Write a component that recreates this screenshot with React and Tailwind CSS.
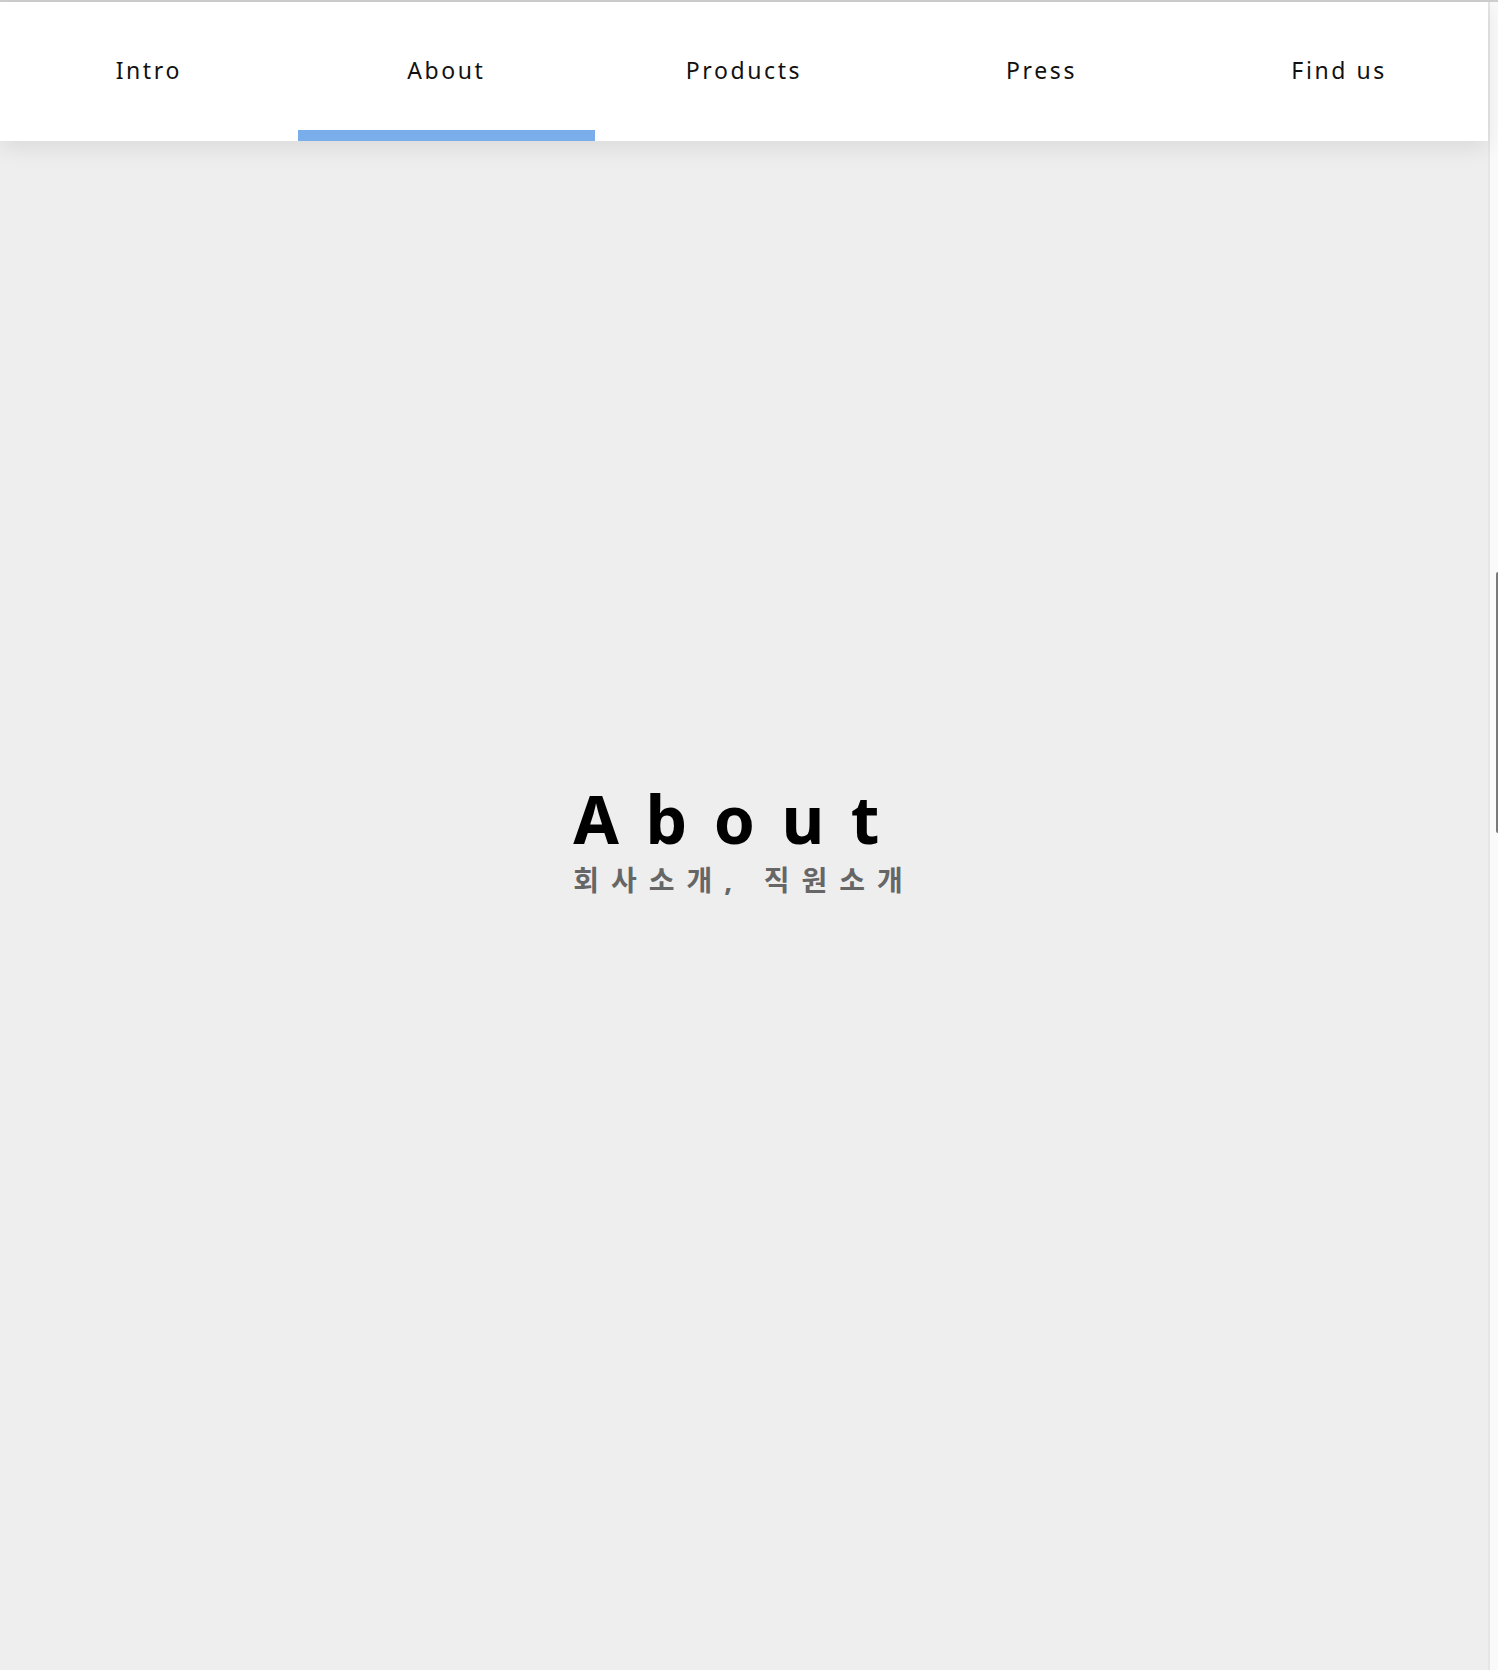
import React from "react";

const tabs = ["Intro", "About", "Products", "Press", "Find us"];

export default function App() {
  const active = "About";

  return (
    <div className="flex flex-col h-[1670px] w-full overflow-hidden bg-[#eeeeee] font-['Noto_Sans','Noto_Sans_CJK_KR',sans-serif]">
      <div className="h-[2px] w-full bg-[#cfcfcf]" />
      <div className="flex flex-1 min-h-0">
        <div className="flex flex-col flex-1 min-w-0">
          {/* nav */}
          <nav className="relative z-10 flex h-[139px] bg-white shadow-[0_6px_22px_rgba(0,0,0,0.09)]">
            {tabs.map((tab) => (
              <div key={tab} className="flex flex-col flex-1">
                <span className="flex flex-1 items-center justify-center pt-[8px] text-[23px] tracking-[2.6px] text-[#111]">
                  {tab}
                </span>
                <div
                  className={
                    tab === active ? "h-[11px] bg-[#7aaeea]" : "h-[11px]"
                  }
                />
              </div>
            ))}
          </nav>

          {/* section */}
          <main className="flex flex-1 justify-center pt-[639px]">
            <div className="flex flex-col items-start">
              <h1 className="text-[66px] leading-[76px] font-bold tracking-[26.5px] text-black">
                About
              </h1>
              <p className="mt-[6px] text-[28px] leading-[36px] font-bold tracking-[12px] text-[#666666]">
                회사소개, 직원소개
              </p>
            </div>
          </main>
        </div>

        {/* scrollbar */}
        <div className="flex w-[10px] justify-end border-l-2 border-[#e6e6e6] bg-[#fafafa]">
          <div className="mt-[570px] h-[261px] w-[2px] rounded-l-full bg-[#7a7a7a]" />
        </div>
      </div>
    </div>
  );
}
